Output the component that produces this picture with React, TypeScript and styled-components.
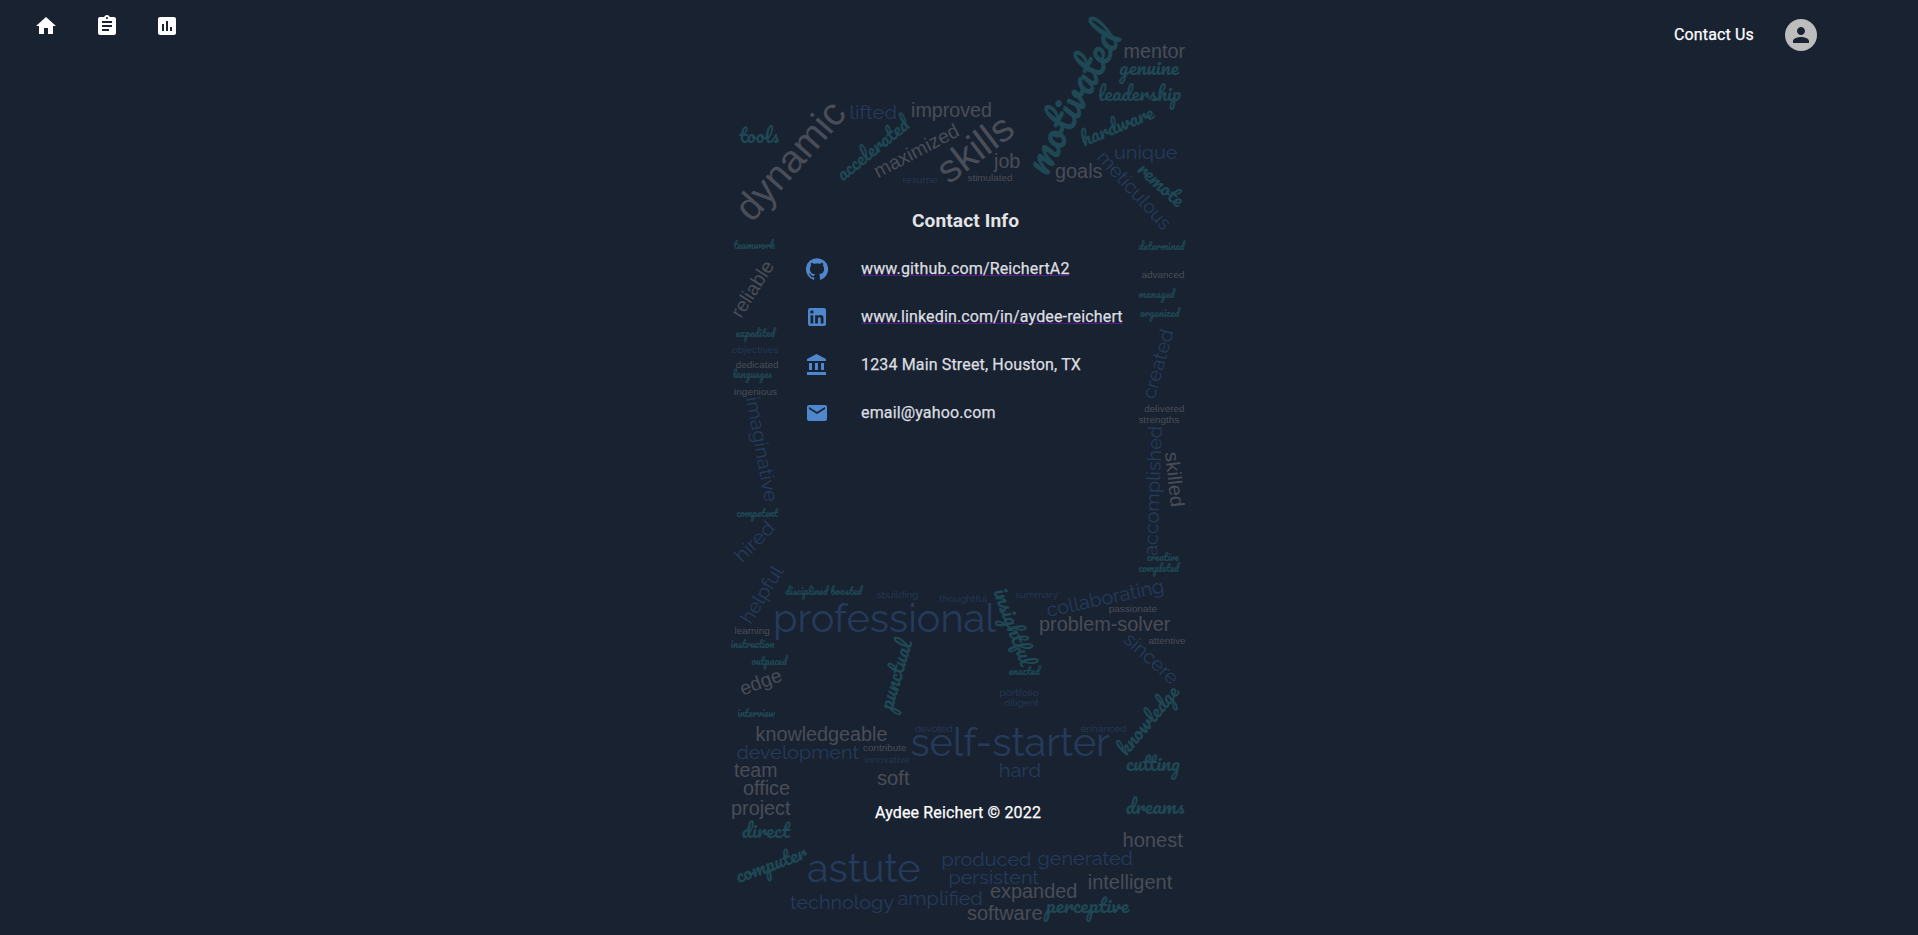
import React from "react";
import styled, { createGlobalStyle } from "styled-components";

const GlobalStyle = createGlobalStyle`
  *, *::before, *::after { box-sizing: border-box; }
  body {
    margin: 0;
    background: #192231;
    font-family: Roboto, "Liberation Sans", sans-serif;
    font-size: 16px;
    letter-spacing: 0.00938em;
  }
`;

type Face = "sans" | "thin" | "script";

const Page = styled.div`
  position: relative;
  display: flex;
  flex-direction: column;
  height: 935px;
  overflow: hidden;
  background: #192231;
  color: #fff;
  -webkit-text-stroke: 0.25px currentColor;
`;

const Cloud = styled.svg`
  position: absolute;
  top: 0;
  left: 720px;
  width: 480px;
  height: 935px;
  letter-spacing: 0;
  pointer-events: none;
  -webkit-text-stroke: 0;
`;

const faceColor = { sans: "#494d57", thin: "#253b5b", script: "#1e4854" };
const faceFamily = {
  sans: `"Liberation Sans", Arial, sans-serif`,
  thin: `Raleway, Lato, sans-serif`,
  script: `Pacifico, "Liberation Serif", serif`,
};

const Word = styled.text<{ $face: Face; $size: number }>`
  fill: ${(p) => faceColor[p.$face]};
  font-family: ${(p) => faceFamily[p.$face]};
  font-size: ${(p) => p.$size}px;
  font-weight: 400;
`;

const TopBar = styled.header`
  position: relative;
  display: flex;
  justify-content: space-between;
  align-items: flex-start;
  height: 198px;
  padding: 14px 101px 0 34px;
`;

const NavIcons = styled.nav`
  display: flex;
  gap: 36.5px;
`;

const IconLink = styled.a`
  display: flex;
  color: #fff;
`;

const Account = styled.div`
  display: flex;
  align-items: center;
  gap: 31px;
  padding-top: 5px;
`;

const ContactLink = styled.span`
  line-height: 24px;
`;

const Avatar = styled.div`
  display: flex;
  align-items: center;
  justify-content: center;
  width: 32px;
  height: 32px;
  border-radius: 50%;
  background: #bdbdbd;
  color: #192231;
`;

const Contact = styled.main`
  position: relative;
  flex: 1;
  width: 350px;
  margin-left: 789px;
`;

const Title = styled.h3`
  margin: 0;
  height: 47px;
  padding-left: 3px;
  font-size: 19.2px;
  font-weight: 700;
  letter-spacing: 0.08px;
  line-height: 46px;
  text-align: center;
  color: #e3e4e6;
  -webkit-text-stroke: 0;
`;

const List = styled.ul`
  margin: 0;
  padding: 0;
  list-style: none;
`;

const Row = styled.li`
  display: flex;
  align-items: center;
  height: 48px;
  padding: 0 16px;
`;

const RowIcon = styled.span`
  display: flex;
  width: 56px;
  color: #4f87cd;
`;

const RowText = styled.span`
  line-height: 24px;
  color: #dddee0;
  white-space: nowrap;
`;

const RowLink = styled.a`
  color: #551a8b;
  text-decoration: underline;
`;

const Footer = styled.footer`
  position: relative;
  height: 134px;
  padding-right: 2px;
  line-height: 24px;
  text-align: center;
`;

const Glyph = styled.svg`
  width: 24px;
  height: 24px;
  fill: currentColor;
`;

const paths = {
  home: "M10 20v-6h4v6h5v-8h3L12 3 2 12h3v8z",
  assignment:
    "M19 3h-4.18C14.4 1.84 13.3 1 12 1c-1.3 0-2.4.84-2.82 2H5c-1.1 0-2 .9-2 2v14c0 1.1.9 2 2 2h14c1.1 0 2-.9 2-2V5c0-1.1-.9-2-2-2zm-7 0c.55 0 1 .45 1 1s-.45 1-1 1-1-.45-1-1 .45-1 1-1zm2 14H7v-2h7v2zm3-4H7v-2h10v2zm0-4H7V7h10v2z",
  assessment:
    "M19 3H5c-1.1 0-2 .9-2 2v14c0 1.1.9 2 2 2h14c1.1 0 2-.9 2-2V5c0-1.1-.9-2-2-2zM9 17H7v-7h2v7zm4 0h-2V7h2v10zm4 0h-2v-4h2v4z",
  person:
    "M12 12c2.21 0 4-1.79 4-4s-1.79-4-4-4-4 1.79-4 4 1.79 4 4 4zm0 2c-2.67 0-8 1.34-8 4v2h16v-2c0-2.66-5.33-4-8-4z",
  github:
    "M12 1.27a11 11 0 00-3.48 21.46c.55.09.73-.28.73-.55v-1.84c-3.03.64-3.67-1.46-3.67-1.46-.55-1.29-1.28-1.65-1.28-1.65-.92-.65.1-.65.1-.65 1.1 0 1.73 1.1 1.73 1.1.92 1.65 2.57 1.2 3.21.92a2 2 0 01.64-1.47c-2.47-.27-5.04-1.19-5.04-5.5 0-1.1.46-2.1 1.2-2.84a3.76 3.76 0 010-2.93s.91-.28 3.11 1.1c1.8-.49 3.7-.49 5.5 0 2.1-1.38 3.02-1.1 3.02-1.1a3.76 3.76 0 01.1 2.93c.83.74 1.2 1.74 1.2 2.94 0 4.21-2.57 5.13-5.04 5.4.45.37.82.92.82 2.02v3.03c0 .27.1.64.73.55A11 11 0 0012 1.27",
  linkedin:
    "M19 3a2 2 0 0 1 2 2v14a2 2 0 0 1-2 2H5a2 2 0 0 1-2-2V5a2 2 0 0 1 2-2h14m-.5 15.5v-5.3a3.26 3.26 0 0 0-3.26-3.26c-.85 0-1.84.52-2.32 1.3v-1.11h-2.79v8.37h2.79v-4.93c0-.77.62-1.4 1.39-1.4a1.4 1.4 0 0 1 1.4 1.4v4.93h2.79M6.88 8.56a1.68 1.68 0 0 0 1.68-1.68c0-.93-.75-1.69-1.68-1.69a1.69 1.69 0 0 0-1.69 1.69c0 .93.76 1.68 1.69 1.68m1.39 9.94v-8.37H5.5v8.37h2.77z",
  bank: "M4 10v7h3v-7H4zm6 0v7h3v-7h-3zM2 22h19v-3H2v3zm14-12v7h3v-7h-3zm-4.5-9L2 6v2h19V6l-9.5-5z",
  mail: "M20 4H4c-1.1 0-1.99.9-1.99 2L2 18c0 1.1.9 2 2 2h16c1.1 0 2-.9 2-2V6c0-1.1-.9-2-2-2zm0 4l-8 5-8-5V6l8 5 8-5v2z",
};

const Icon = ({ name }: { name: keyof typeof paths }) => (
  <Glyph viewBox="0 0 24 24" aria-hidden="true">
    <path d={paths[name]} />
  </Glyph>
);

// Each word: text, face, font size, then the start and end of its baseline.
type Entry = [string, Face, number, number, number, number, number];

const words: Entry[] = [
  ["dynamic", "sans", 39, 752, 223.5, 848, 114.5],
  ["tools", "script", 20, 739, 143, 779, 143],
  ["lifted", "thin", 19.5, 849.5, 118.7, 897, 118.7],
  ["improved", "sans", 19.5, 911, 117, 992, 117],
  ["accelerated", "script", 19.5, 843, 182, 911, 127],
  ["maximized", "sans", 19.5, 878, 178.3, 960.7, 135],
  ["skills", "sans", 39, 949, 185, 1017, 133],
  ["job", "sans", 19.5, 994, 167.5, 1020.3, 167.5],
  ["resume", "thin", 10, 902.7, 182.7, 937.3, 182.7],
  ["stimulated", "sans", 9.8, 967.5, 181, 1012.5, 181],
  ["motivated", "script", 41, 1047.5, 177.5, 1122.5, 37],
  ["mentor", "sans", 19.5, 1123.5, 58, 1185, 58],
  ["genuine", "script", 19.5, 1119, 74.7, 1179, 74.7],
  ["leadership", "script", 19.5, 1098, 101.3, 1181, 101.3],
  ["hardware", "script", 19.5, 1084, 147, 1155.5, 118],
  ["unique", "thin", 19.5, 1114, 159.3, 1177.5, 159.3],
  ["meticulous", "thin", 19.5, 1096, 158, 1163, 231],
  ["remote", "script", 19.5, 1136, 171, 1177, 208],
  ["goals", "sans", 19.5, 1055, 178, 1102.5, 178],
  ["teamwork", "script", 9.8, 733.5, 249, 775, 249],
  ["reliable", "sans", 19.5, 741, 319, 774.7, 265.7],
  ["expedited", "script", 9.8, 735.5, 336.7, 775, 336.7],
  ["objectives", "thin", 10, 732, 352.7, 778.3, 352.7],
  ["dedicated", "sans", 9.8, 735.7, 367.7, 778.5, 367.7],
  ["languages", "script", 9.8, 733, 378, 772, 378],
  ["ingenious", "sans", 9.8, 734, 394.7, 777, 394.7],
  ["imaginative", "thin", 19.5, 746, 398, 765, 503],
  ["competent", "script", 9.8, 736.5, 516.7, 778.3, 516.7],
  ["hired", "thin", 19.5, 742.3, 563.3, 776, 529],
  ["helpful", "thin", 19.5, 750.7, 625, 784, 571],
  ["disciplined", "script", 9.8, 785, 595, 828, 595],
  ["boosted", "script", 9.8, 830.5, 595, 862, 595],
  ["sbuilding", "thin", 10, 876.7, 598.3, 918.3, 598.3],
  ["thoughtful", "thin", 10, 939.3, 601.7, 987.3, 601.7],
  ["professional", "thin", 39, 773, 631.7, 996, 631.7],
  ["learning", "sans", 9.8, 734.5, 633.7, 769.8, 633.7],
  ["instruction", "script", 9.8, 730.5, 647.7, 774.3, 647.7],
  ["determined", "script", 9.8, 1138.5, 250, 1184.5, 250],
  ["advanced", "sans", 9.8, 1141.5, 277.7, 1184.6, 277.7],
  ["managed", "script", 9.8, 1138.5, 297.7, 1174.5, 297.7],
  ["organized", "script", 9.8, 1140, 317, 1179.5, 317],
  ["created", "thin", 19.5, 1154.5, 400, 1174, 331.5],
  ["delivered", "sans", 9.8, 1144.3, 411.7, 1184.6, 411.7],
  ["strengths", "sans", 9.8, 1138.4, 422.7, 1179.3, 422.7],
  ["accomplished", "thin", 19.5, 1157.3, 556, 1162, 426],
  ["skilled", "sans", 19.5, 1165, 452.5, 1171, 507.5],
  ["creative", "script", 9.8, 1147, 561.3, 1179, 561.3],
  ["completed", "script", 9.8, 1138.5, 572, 1179, 572],
  ["collaborating", "thin", 19.5, 1048, 617, 1165, 592],
  ["summary", "thin", 10, 1015.2, 597.7, 1058, 597.7],
  ["passionate", "sans", 9.8, 1108.7, 612, 1157, 612],
  ["problem-solver", "sans", 19.7, 1039, 631.3, 1170.3, 631.3],
  ["insightful", "script", 20.5, 993, 591.5, 1021, 667.5],
  ["attentive", "sans", 9.8, 1148.4, 643.7, 1185.6, 643.7],
  ["sincere", "thin", 19.5, 1122.5, 641, 1171.5, 685.5],
  ["outpaced", "script", 9.8, 751.5, 664.7, 787, 664.7],
  ["edge", "sans", 19.5, 742.7, 695.7, 783.3, 680.3],
  ["interview", "script", 9.8, 737.5, 717, 775, 717],
  ["knowledgeable", "sans", 19.5, 755.5, 741, 887.5, 741],
  ["development", "thin", 19.5, 736.5, 759.3, 859, 759.3],
  ["contribute", "sans", 9.8, 863, 751, 906.5, 751],
  ["innovative", "thin", 10, 864.3, 762.7, 910, 762.7],
  ["team", "sans", 19.5, 734, 777, 777.5, 777],
  ["office", "sans", 19.5, 743, 795.3, 790, 795.3],
  ["project", "sans", 19.5, 731, 815, 790.5, 815],
  ["soft", "sans", 19.5, 877, 785, 909.5, 785],
  ["punctual", "script", 20.5, 892.5, 711, 912.5, 642.5],
  ["devoted", "thin", 10, 915, 732.3, 952.7, 732.3],
  ["self-starter", "thin", 39, 910.5, 756, 1110, 756],
  ["direct", "script", 19.5, 741.5, 837.5, 790, 837.5],
  ["computer", "script", 19.5, 738.5, 883.5, 808.5, 858],
  ["astute", "thin", 39, 807, 881.7, 920.5, 881.7],
  ["technology", "thin", 19.5, 790, 908.7, 894, 908.7],
  ["amplified", "thin", 19.5, 897.5, 905, 982.7, 905],
  ["produced", "thin", 19.5, 941.5, 866, 1031.5, 866],
  ["persistent", "thin", 19.5, 948.5, 884, 1039, 884],
  ["generated", "thin", 19.5, 1037.5, 865.3, 1133, 865.3],
  ["expanded", "sans", 19.5, 990, 898, 1077.3, 898],
  ["software", "sans", 19.5, 967, 920, 1042.5, 920],
  ["perceptive", "script", 19.5, 1046, 913, 1129, 913],
  ["intelligent", "sans", 19.5, 1087.7, 889, 1172.3, 889],
  ["honest", "sans", 19.5, 1122.5, 847, 1182.8, 847],
  ["dreams", "script", 19.5, 1125.5, 814, 1184.5, 814],
  ["hard", "thin", 19.5, 998.7, 776.7, 1041, 776.7],
  ["cutting", "script", 19.5, 1126, 770.9, 1180, 770.9],
  ["enhanced", "thin", 10, 1080.5, 732.3, 1126.5, 732.3],
  ["knowledge", "script", 19.5, 1126.5, 757, 1180.5, 692.5],
  ["enacted", "script", 9.8, 1008.5, 675, 1040, 675],
  ["portfolio", "thin", 10, 999.5, 696.3, 1038.5, 696.3],
  ["diligent", "thin", 10, 1004.2, 705.7, 1038.5, 705.7],
];

const WordCloud = () => (
  <Cloud viewBox="720 0 480 935" aria-hidden="true">
    {words.map(([text, face, size, x1, y1, x2, y2]) => (
      <Word
        key={text}
        $face={face}
        $size={size}
        textLength={Math.hypot(x2 - x1, y2 - y1)}
        lengthAdjust="spacingAndGlyphs"
        transform={`translate(${x1} ${y1}) rotate(${
          (Math.atan2(y2 - y1, x2 - x1) * 180) / Math.PI
        })`}
      >
        {text}
      </Word>
    ))}
  </Cloud>
);

const contacts: { icon: keyof typeof paths; text: string; link?: boolean }[] = [
  { icon: "github", text: "www.github.com/ReichertA2", link: true },
  { icon: "linkedin", text: "www.linkedin.com/in/aydee-reichert", link: true },
  { icon: "bank", text: "1234 Main Street, Houston, TX" },
  { icon: "mail", text: "email@yahoo.com" },
];

export default function App() {
  return (
    <Page>
      <GlobalStyle />
      <WordCloud />
      <TopBar>
        <NavIcons>
          <IconLink><Icon name="home" /></IconLink>
          <IconLink><Icon name="assignment" /></IconLink>
          <IconLink><Icon name="assessment" /></IconLink>
        </NavIcons>
        <Account>
          <ContactLink>Contact Us</ContactLink>
          <Avatar><Icon name="person" /></Avatar>
        </Account>
      </TopBar>
      <Contact>
        <Title>Contact Info</Title>
        <List>
          {contacts.map(({ icon, text, link }) => (
            <Row key={text}>
              <RowIcon><Icon name={icon} /></RowIcon>
              {link ? (
                <RowLink><RowText>{text}</RowText></RowLink>
              ) : (
                <RowText>{text}</RowText>
              )}
            </Row>
          ))}
        </List>
      </Contact>
      <Footer>Aydee Reichert © 2022</Footer>
    </Page>
  );
}
